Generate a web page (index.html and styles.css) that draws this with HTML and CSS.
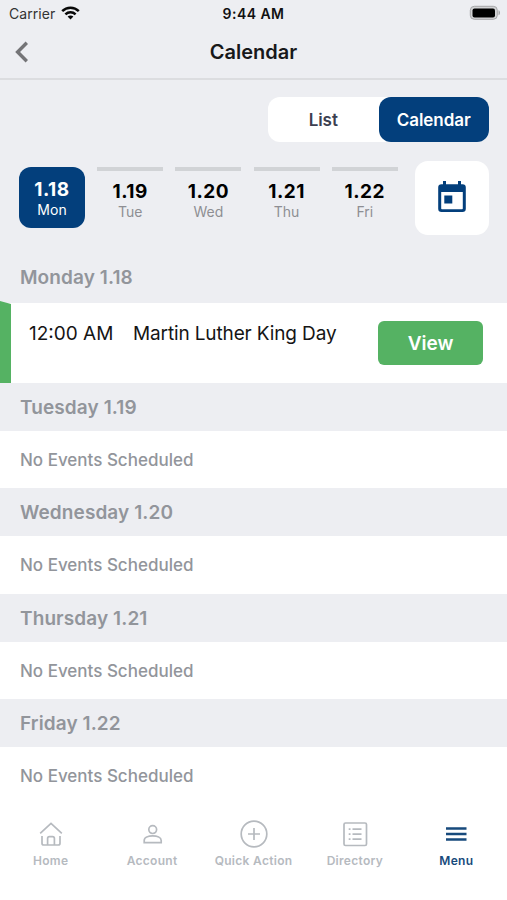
FILE: index.html
```html
<!DOCTYPE html>
<html lang="en">
<head>
<meta charset="utf-8">
<title>Calendar</title>
<link rel="stylesheet" href="styles.css">
</head>
<body>
<header>
  <div class="status">
    <div class="carrier"><span>Carrier</span>
      <svg width="19" height="14" viewBox="0 0 19 14" fill="none" stroke="#080808" stroke-width="2.5"><path d="M1.2 5.2C5.8.6 13.2.6 17.8 5.2M4.4 8.4c2.9-2.8 7.3-2.8 10.2 0"/><path d="M9.5 13.5 6.6 10.6c1.7-1.5 4.1-1.5 5.8 0z" fill="#080808" stroke="none"/></svg>
    </div>
    <span class="time">9:44 AM</span>
    <svg class="battery" width="32" height="16" viewBox="0 0 32 16"><rect x="1.300" y="1.300" width="27" height="13" rx="4" fill="#d2d3d5" stroke="#a5a6a8" stroke-width="1"/><rect x="3.500" y="3.400" width="22.500" height="9" rx="2" fill="#000"/><path d="M29.500 5.300c2 .6 2 4.400 0 5z" fill="#a5a6a8"/></svg>
  </div>
  <div class="titlebar">
    <svg class="back" width="16" height="24" viewBox="0 0 16 24"><path d="M13.800 2.800 4.600 12l9.200 9.200" fill="none" stroke="#747477" stroke-width="3.400"/></svg>
    <h1>Calendar</h1>
  </div>
</header>
<main>
  <div class="switch"><span class="tab">List</span><span class="tab selected">Calendar</span></div>
  <div class="week">
    <div class="day current"><b>1.18</b><span>Mon</span></div>
    <div class="day"><b>1.19</b><span>Tue</span></div>
    <div class="day"><b>1.20</b><span>Wed</span></div>
    <div class="day"><b>1.21</b><span>Thu</span></div>
    <div class="day"><b>1.22</b><span>Fri</span></div>
    <div class="picker"><svg width="30" height="32" viewBox="0 0 30 32"><path fill="#033f7c" fill-rule="evenodd" d="M6 0h3v3.200h12V0h3v3.200h1.500a3.300 3.300 0 0 1 3.300 3.300v21.200a3.300 3.300 0 0 1-3.300 3.300h-21a3.300 3.300 0 0 1-3.300-3.300V6.500a3.300 3.300 0 0 1 3.300-3.300H6zM4.200 11v16.500q0 .7.700.7h20.200q.7 0 .7-.7V11zM7.300 14.400h8v8h-8z"/></svg></div>
  </div>
  <h2 class="first">Monday 1.18</h2>
  <section class="event"><span class="hour">12:00 AM</span><span class="name">Martin Luther King Day</span><span class="view">View</span></section>
  <h2>Tuesday 1.19</h2>
  <p>No Events Scheduled</p>
  <h2>Wednesday 1.20</h2>
  <p>No Events Scheduled</p>
  <h2>Thursday 1.21</h2>
  <p>No Events Scheduled</p>
  <h2>Friday 1.22</h2>
  <p>No Events Scheduled</p>
</main>
<nav>
  <div class="item"><svg viewBox="0 0 28 28"><path d="m3.200 13.300 10.800-10 10.800 10M5 16v7.200Q5 25 6.800 25h14.400q1.800 0 1.800-1.800V16M10.600 25v-6.500q0-1.800 1.800-1.800h3.200q1.800 0 1.800 1.800V25"/></svg><span>Home</span></div>
  <div class="item"><svg viewBox="0 0 28 28"><circle cx="14.700" cy="9.600" r="3.900"/><path d="M6.200 22.600v-2.200c0-6 17-6 17 0v2.200z"/></svg><span>Account</span></div>
  <div class="item"><svg viewBox="0 0 28 28"><circle cx="14" cy="14" r="12.800"/><path d="M14 8v12M8 14h12"/></svg><span>Quick Action</span></div>
  <div class="item"><svg viewBox="0 0 28 28"><rect x="3" y="3" width="22.500" height="22.500" rx="1.500"/><path d="M11.500 9.200h9M11.500 14.200h9M11.500 19.200h9M7.700 9.200h1.800M7.700 14.200h1.800M7.700 19.200h1.800"/></svg><span>Directory</span></div>
  <div class="item active"><svg viewBox="0 0 28 28"><path d="M4 8.500h20.500M4 14h20.500M4 19.500h20.500"/></svg><span>Menu</span></div>
</nav>
</body>
</html>
```

FILE: styles.css
```css
* { box-sizing: border-box; }
body { margin: 0; width: 507px; height: 900px; overflow: hidden; background: #fff; font-family: Inter, "Liberation Sans", sans-serif; display: flex; flex-direction: column; }
svg { display: block; flex: none; }
header { height: 80px; background: #edeef2; border-bottom: 2px solid #dcdde0; }
.status { height: 28px; display: grid; grid-template-columns: 1fr auto 1fr; align-items: center; padding: 0 6px 2px 9px; font-size: 14px; color: #222; }
.carrier { display: flex; align-items: center; gap: 6px; }
.carrier span { letter-spacing: .05px; color: #333; }
.carrier svg { margin-top: -1px; }
.time { font-weight: 600; font-size: 14px; letter-spacing: .45px; color: #111; margin-right: 3px; }
.battery { justify-self: end; margin-top: 0; }
.titlebar { height: 48px; display: grid; grid-template-columns: 1fr auto 1fr; align-items: center; padding: 0 13px; }
h1 { margin: 0; font-size: 20px; font-weight: 600; letter-spacing: 0; color: #17181a; }
main { flex: none; background: #edeef2; }
.switch { width: 221px; height: 45px; margin: 17px 18px 0 auto; display: flex; background: #fff; border-radius: 12px; }
.tab { flex: 1; display: flex; align-items: center; justify-content: center; font-size: 17px; font-weight: 600; letter-spacing: -.05px; color: #3c3f50; }
.selected { background: #033f7c; color: #fff; border-radius: 12px; }
.week { display: flex; gap: 12.200px; height: 74px; margin: 19px 18px 0 19px; }
.day { width: 66px; height: 61px; margin-top: 6px; border-top: 4px solid #d1d3d6; padding-top: 8px; display: flex; flex-direction: column; align-items: center; color: #8e8e93; font-size: 14px; line-height: 18px; }
.day b { font-size: 19px; line-height: 25px; height: 24px; letter-spacing: .5px; font-weight: 700; color: #000; }
.current { border: 0; border-radius: 12px; background: #033f7c; color: #fff; padding-top: 10px; }
.current b { color: #fff; }
.picker { width: 74px; height: 74px; margin-left: auto; background: #fff; border-radius: 13px; display: flex; align-items: center; justify-content: center; padding-bottom: 3px; }
h2 { margin: 0; height: 47.800px; padding: 0 20px; font-size: 19px; line-height: 49px; font-weight: 600; letter-spacing: .1px; color: #92959b; }
h2.first { height: 68px; padding-top: 18px; }
.event { height: 80px; display: flex; align-items: flex-start; background: #fff; padding: 18px 24px 0 29px; font-size: 19px; line-height: 25px; color: #151515; position: relative; }
.event::before { content: ""; position: absolute; left: 0; top: -2px; width: 11px; height: 82px; background: #55b263; clip-path: polygon(0 0, 100% 3px, 100% 100%, 0 100%); }
.hour { width: 104px; }
.name { letter-spacing: -.13px; }
.view { width: 105px; height: 44px; margin-left: auto; border-radius: 6px; background: #55b263; color: #fff; font-size: 19px; font-weight: 600; line-height: 45px; text-align: center; }
p { margin: 0; height: 57.600px; padding: 0 20px; background: #fff; font-size: 17px; line-height: 58px; font-weight: 500; color: #92959b; }
nav { flex: 1; display: flex; background: #fff; padding-top: 15px; }
.item { flex: 1; display: flex; flex-direction: column; align-items: center; color: #b6babf; font-size: 12px; line-height: 16px; font-weight: 600; letter-spacing: .3px; white-space: nowrap; }
.item svg { width: 28px; height: 28px; margin-bottom: 5px; fill: none; stroke: currentColor; stroke-width: 1.700; }
.active { color: #174a7c; }
.active svg { stroke-width: 2.400; }
```
